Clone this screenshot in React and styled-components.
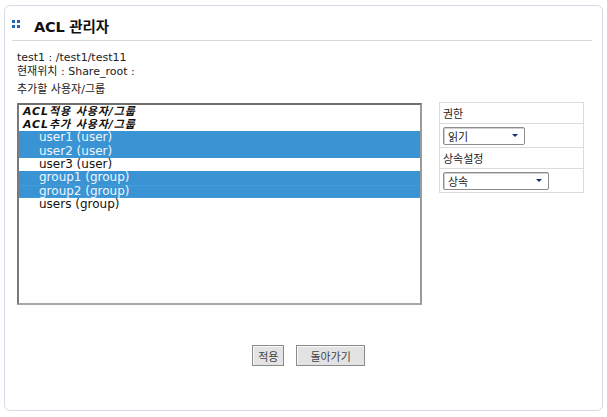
import React from 'react'
import styled, { createGlobalStyle } from 'styled-components'

const GlobalStyle = createGlobalStyle`
  body {
    margin: 0;
    background: #fff;
    font-family: 'DejaVu Sans', 'Noto Sans CJK KR', sans-serif;
    color: #333;
  }
`

const Panel = styled.div`
  box-sizing: border-box;
  width: 599px;
  height: 406px;
  margin: 5px 0 0 4px;
  border: 1px solid #d6dae9;
  border-radius: 6px;
  padding: 0 10px 0 7px;
  display: flex;
  flex-direction: column;
`
const Header = styled.div`
  box-sizing: border-box;
  display: flex;
  align-items: center;
  height: 35px;
  padding-top: 4px;
  border-bottom: 1px solid #d9d9d9;
`
const Dots = styled.span`
  display: grid;
  grid-template-columns: 3px 3px;
  grid-auto-rows: 3px;
  gap: 2px;
  margin: 0 14px 2px 0;
  i {
    background: #2463b5;
  }
`
const Title = styled.h1`
  margin: 0;
  font-size: 14.5px;
  font-weight: bold;
  color: #111;
  letter-spacing: -0.2px;
`
const Body = styled.div`
  padding: 10px 0 0 5px;
  display: flex;
  flex-direction: column;
`
const InfoLine = styled.div`
  font-size: 11px;
  line-height: 14px;
  margin-top: ${(p) => p.$gap || 0}px;
  color: #222;
`
const Main = styled.div`
  display: flex;
  align-items: flex-start;
  margin-top: 6px;
`
const ListBox = styled.div`
  box-sizing: border-box;
  width: 405px;
  height: 202px;
  border-style: solid;
  border-width: 2px;
  border-color: #6f6f6f #9a9a9a #a8a8a8 #7a7a7a;
  background: #fff;
  overflow: hidden;
`
const Row = styled.div`
  box-sizing: border-box;
  height: ${(p) => (p.$heading ? 13 : 13.4)}px;
  line-height: 11px;
  font-size: ${(p) => (p.$heading ? 11 : 12)}px;
  font-weight: ${(p) => (p.$heading ? 'bold' : 'normal')};
  font-style: ${(p) => (p.$heading ? 'italic' : 'normal')};
  letter-spacing: ${(p) => (p.$heading ? 0.9 : 0)}px;
  padding-left: ${(p) => (p.$heading ? 4 : 20)}px;
  color: ${(p) => (p.$selected ? '#eef4ff' : '#111')};
  background: ${(p) => (p.$selected ? '#3a94d3' : 'transparent')};
  border-top: 1px ${(p) => (p.$focus ? 'dotted #b9864f' : 'solid transparent')};
  border-bottom: 1px ${(p) => (p.$focus ? 'dotted #b9864f' : 'solid transparent')};
  white-space: nowrap;
  display: flex;
  align-items: center;
`
const Side = styled.table`
  margin: -1px 0 0 17px;
  width: 145px;
  border-collapse: collapse;
  font-size: 11px;
  td {
    border: 1px solid #dcdcdc;
    padding: 0 3px;
    color: #222;
  }
`
const LabelCell = styled.td`
  height: 20px;
`
const FieldCell = styled.td`
  height: 23px;
`
const Select = styled.div`
  box-sizing: border-box;
  width: ${(p) => p.$width}px;
  height: 18px;
  border: 1px solid #8c8c8c;
  border-radius: 2px;
  box-shadow: inset 1px 1px 0 #d0d0d0;
  background: #fff;
  display: flex;
  align-items: center;
  justify-content: space-between;
  padding: 0 2px 0 4px;
  font-size: 11px;
`
const Arrow = styled.span`
  width: 14px;
  height: 14px;
  display: flex;
  align-items: center;
  justify-content: center;
  &::after {
    content: '';
    border-left: 3px solid transparent;
    border-right: 3px solid transparent;
    border-top: 3px solid #1a2a6b;
  }
`
const Buttons = styled.div`
  display: flex;
  justify-content: center;
  gap: 12px;
  margin: 40px 0 0 8px;
`
const Button = styled.button`
  box-sizing: border-box;
  height: 21px;
  padding: 0 ${(p) => p.$pad}px;
  border: 1px solid #8a8a8a;
  background: #e3e3e3;
  box-shadow: inset 1px 1px 0 #fafafa;
  font-family: 'DejaVu Sans', 'Noto Sans CJK KR', sans-serif;
  font-size: 11px;
  color: #444;
`

const items = [
  { label: 'ACL적용 사용자/그룹', heading: true },
  { label: 'ACL추가 사용자/그룹', heading: true },
  { label: 'user1 (user)', selected: true },
  { label: 'user2 (user)', selected: true },
  { label: 'user3 (user)' },
  { label: 'group1 (group)', selected: true },
  { label: 'group2 (group)', selected: true, focus: true },
  { label: 'users (group)' },
]

export default function App() {
  return (
    <>
      <GlobalStyle />
      <Panel>
        <Header>
          <Dots>
            <i />
            <i />
            <i />
            <i />
          </Dots>
          <Title>ACL 관리자</Title>
        </Header>
        <Body>
          <InfoLine>test1 : /test1/test11</InfoLine>
          <InfoLine>현재위치 : Share_root :</InfoLine>
          <InfoLine $gap={4}>추가할 사용자/그룹</InfoLine>
          <Main>
            <ListBox>
              {items.map((it) => (
                <Row
                  key={it.label}
                  $heading={it.heading}
                  $selected={it.selected}
                  $focus={it.focus}
                >
                  {it.label}
                </Row>
              ))}
            </ListBox>
            <Side>
              <tbody>
                <tr>
                  <LabelCell>권한</LabelCell>
                </tr>
                <tr>
                  <FieldCell>
                    <Select $width={82}>
                      읽기
                      <Arrow />
                    </Select>
                  </FieldCell>
                </tr>
                <tr>
                  <LabelCell>상속설정</LabelCell>
                </tr>
                <tr>
                  <FieldCell>
                    <Select $width={106}>
                      상속
                      <Arrow />
                    </Select>
                  </FieldCell>
                </tr>
              </tbody>
            </Side>
          </Main>
          <Buttons>
            <Button $pad={5}>적용</Button>
            <Button $pad={13}>돌아가기</Button>
          </Buttons>
        </Body>
      </Panel>
    </>
  )
}
